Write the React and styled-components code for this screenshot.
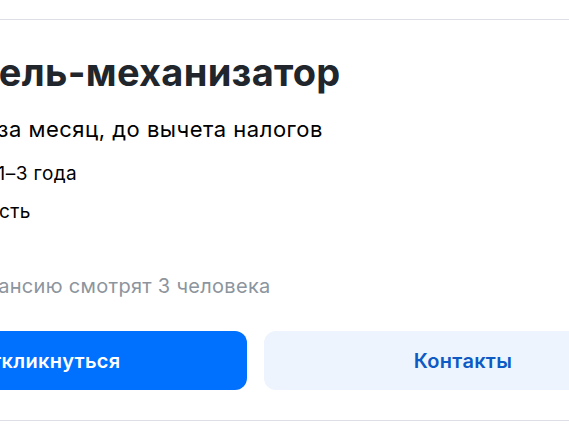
import styled, { createGlobalStyle } from 'styled-components';

const GlobalStyle = createGlobalStyle`
  html, body {
    margin: 0;
    padding: 0;
    background: #ffffff;
  }
  body {
    font-family: Inter, 'Liberation Sans', Arial, sans-serif;
    overflow: hidden;
  }
`;

const Page = styled.div`
  width: 569px;
  height: 427px;
  overflow: hidden;
  padding-top: 19px;
  box-sizing: border-box;
`;

const Divider = styled.div`
  height: 1px;
  background-color: #dcdfe3;
`;

const Card = styled.div`
  display: flex;
  flex-direction: column;
  padding-top: 29px;
  padding-bottom: 30px;
`;

// строки обрезаны слева, как на скрине
const Title = styled.h1`
  margin: 0 0 0 ${(p) => p.$shift}px;
  font-size: 38px;
  line-height: 46px;
  font-weight: 700;
  color: #20262b;
  white-space: nowrap;
  letter-spacing: 0.3px;
`;

const Salary = styled.div`
  margin: 19px 0 0 ${(p) => p.$shift}px;
  font-size: 22px;
  line-height: 30px;
  color: #000000;
  white-space: nowrap;
  letter-spacing: 0.5px;
`;

const Info = styled.div`
  margin: ${(p) => p.$top}px 0 0 ${(p) => p.$shift}px;
  font-size: 19px;
  line-height: 28px;
  color: #000000;
  white-space: nowrap;
  letter-spacing: 0.4px;
`;

const Watching = styled.div`
  margin: 46px 0 0 ${(p) => p.$shift}px;
  font-size: 20px;
  line-height: 28px;
  color: #8c959e;
  white-space: nowrap;
  letter-spacing: 0.3px;
`;

const Actions = styled.div`
  display: flex;
  gap: 17px;
  margin: 31px 0 0 -151px;
`;

const Button = styled.div`
  flex: 0 0 398px;
  height: 59px;
  border-radius: 12px;
  display: flex;
  align-items: center;
  justify-content: center;
  font-size: 20px;
  font-weight: 600;
  letter-spacing: 0.3px;
  background-color: ${(p) => (p.$primary ? '#0070ff' : '#edf4fd')};
  color: ${(p) => (p.$primary ? '#ffffff' : '#0d5ac5')};
  cursor: pointer;
`;

export default function App() {
  return (
    <>
      <GlobalStyle />
      <Page>
        <Divider />
        <Card>
          <Title $shift={-20}>тель-механизатор</Title>
          <Salary $shift={-25}>₽ за месяц, до вычета налогов</Salary>
          <Info $top={16} $shift={-14}>: 1–3 года</Info>
          <Info $top={10} $shift={-1}>сть</Info>
          <Watching $shift={-13}>кансию смотрят 3 человека</Watching>
          <Actions>
            <Button $primary>Откликнуться</Button>
            <Button>Контакты</Button>
          </Actions>
        </Card>
        <Divider />
      </Page>
    </>
  );
}
